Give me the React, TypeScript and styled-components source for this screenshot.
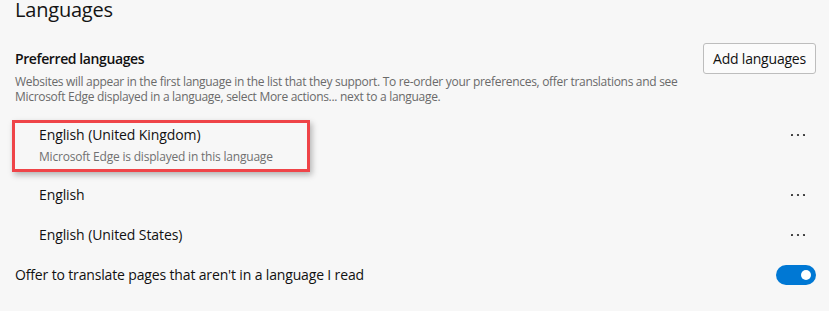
import React from "react";
import styled, { createGlobalStyle } from "styled-components";

const GlobalStyle = createGlobalStyle`
  html, body {
    margin: 0;
    padding: 0;
    background: #f7f7f7;
  }
  body {
    font-family: "Open Sans", "Noto Sans", "Liberation Sans", sans-serif;
    color: #111111;
    -webkit-font-smoothing: antialiased;
  }
`;

const Page = styled.div`
  padding: 0 13px 0 15px;
  overflow: hidden;
  height: 311px;
  box-sizing: border-box;
`;

const Title = styled.h1`
  margin: -1px 0 0;
  font-size: 20px;
  line-height: 22px;
  font-weight: 400;
  letter-spacing: -0.2px;
  color: #141414;
`;

const HeaderRow = styled.div`
  display: flex;
  justify-content: space-between;
  align-items: flex-start;
  margin-top: 22px;
`;

const HeaderText = styled.div`
  padding-top: 6px;
`;

const SectionTitle = styled.div`
  font-size: 14px;
  line-height: 20px;
  font-weight: 600;
  letter-spacing: -0.4px;
  color: #111111;
`;

const Description = styled.div`
  margin-top: 5px;
  font-size: 12px;
  line-height: 15px;
  letter-spacing: -0.3px;
  color: #6a6a6a;
  white-space: nowrap;
`;

const Button = styled.button`
  width: 113px;
  height: 31px;
  padding: 0;
  border: 1px solid #bdbdbd;
  border-radius: 3px;
  background: #fbfbfb;
  font-family: inherit;
  font-size: 14px;
  letter-spacing: -0.2px;
  color: #111111;
  cursor: pointer;
`;

const List = styled.div`
  margin-top: 11px;
  display: flex;
  flex-direction: column;
`;

const LangRow = styled.div`
  position: relative;
  display: flex;
  align-items: flex-start;
  justify-content: space-between;
  padding: 10px 0 10px 24px;
`;

const LangText = styled.div`
  display: flex;
  flex-direction: column;
`;

const LangName = styled.div`
  font-size: 14px;
  line-height: 20px;
  letter-spacing: -0.1px;
  color: #111111;
`;

const LangNote = styled.div`
  margin-top: 4px;
  font-size: 12px;
  line-height: 16px;
  letter-spacing: -0.2px;
  color: #707070;
`;

const MoreButton = styled.button`
  width: 36px;
  height: 20px;
  padding: 0;
  border: none;
  background: transparent;
  display: flex;
  align-items: center;
  justify-content: center;
  color: #222222;
  cursor: pointer;
`;

const Highlight = styled.div`
  position: absolute;
  left: -3px;
  top: 5px;
  width: 298px;
  height: 52px;
  box-sizing: border-box;
  border: 3px solid #ef4448;
  box-shadow: 2px 3px 6px rgba(0, 0, 0, 0.28);
  pointer-events: none;
`;

const ToggleRow = styled.div`
  display: flex;
  align-items: center;
  justify-content: space-between;
  height: 40px;
`;

const ToggleLabel = styled.div`
  font-size: 14px;
  line-height: 20px;
  letter-spacing: -0.15px;
  color: #111111;
`;

const Toggle = styled.div<{ $on: boolean }>`
  width: 40px;
  height: 20px;
  border-radius: 10px;
  box-sizing: border-box;
  padding: 5px;
  display: flex;
  justify-content: ${(p) => (p.$on ? "flex-end" : "flex-start")};
  align-items: center;
  background: ${(p) => (p.$on ? "#0078d4" : "#ffffff")};
`;

const Knob = styled.div`
  width: 10px;
  height: 10px;
  border-radius: 50%;
  background: #ffffff;
`;

const Dots = () => (
  <svg width="14" height="4" viewBox="0 0 14 4" aria-hidden="true">
    <circle cx="1" cy="2" r="1.1" fill="currentColor" />
    <circle cx="7" cy="2" r="1.1" fill="currentColor" />
    <circle cx="13" cy="2" r="1.1" fill="currentColor" />
  </svg>
);

const languages = [
  { name: "English (United Kingdom)", note: "Microsoft Edge is displayed in this language", highlighted: true },
  { name: "English" },
  { name: "English (United States)" },
];

export default function App() {
  return (
    <>
      <GlobalStyle />
      <Page>
        <Title>Languages</Title>
        <HeaderRow>
          <HeaderText>
            <SectionTitle>Preferred languages</SectionTitle>
            <Description>
              Websites will appear in the first language in the list that they support. To re-order your preferences, offer translations and see
              <br />
              Microsoft Edge displayed in a language, select More actions... next to a language.
            </Description>
          </HeaderText>
          <Button>Add languages</Button>
        </HeaderRow>
        <List>
          {languages.map((l) => (
            <LangRow key={l.name}>
              <LangText>
                <LangName>{l.name}</LangName>
                {l.note && <LangNote>{l.note}</LangNote>}
              </LangText>
              <MoreButton aria-label="More actions">
                <Dots />
              </MoreButton>
              {l.highlighted && <Highlight />}
            </LangRow>
          ))}
        </List>
        <ToggleRow>
          <ToggleLabel>Offer to translate pages that aren't in a language I read</ToggleLabel>
          <Toggle $on>
            <Knob />
          </Toggle>
        </ToggleRow>
      </Page>
    </>
  );
}
